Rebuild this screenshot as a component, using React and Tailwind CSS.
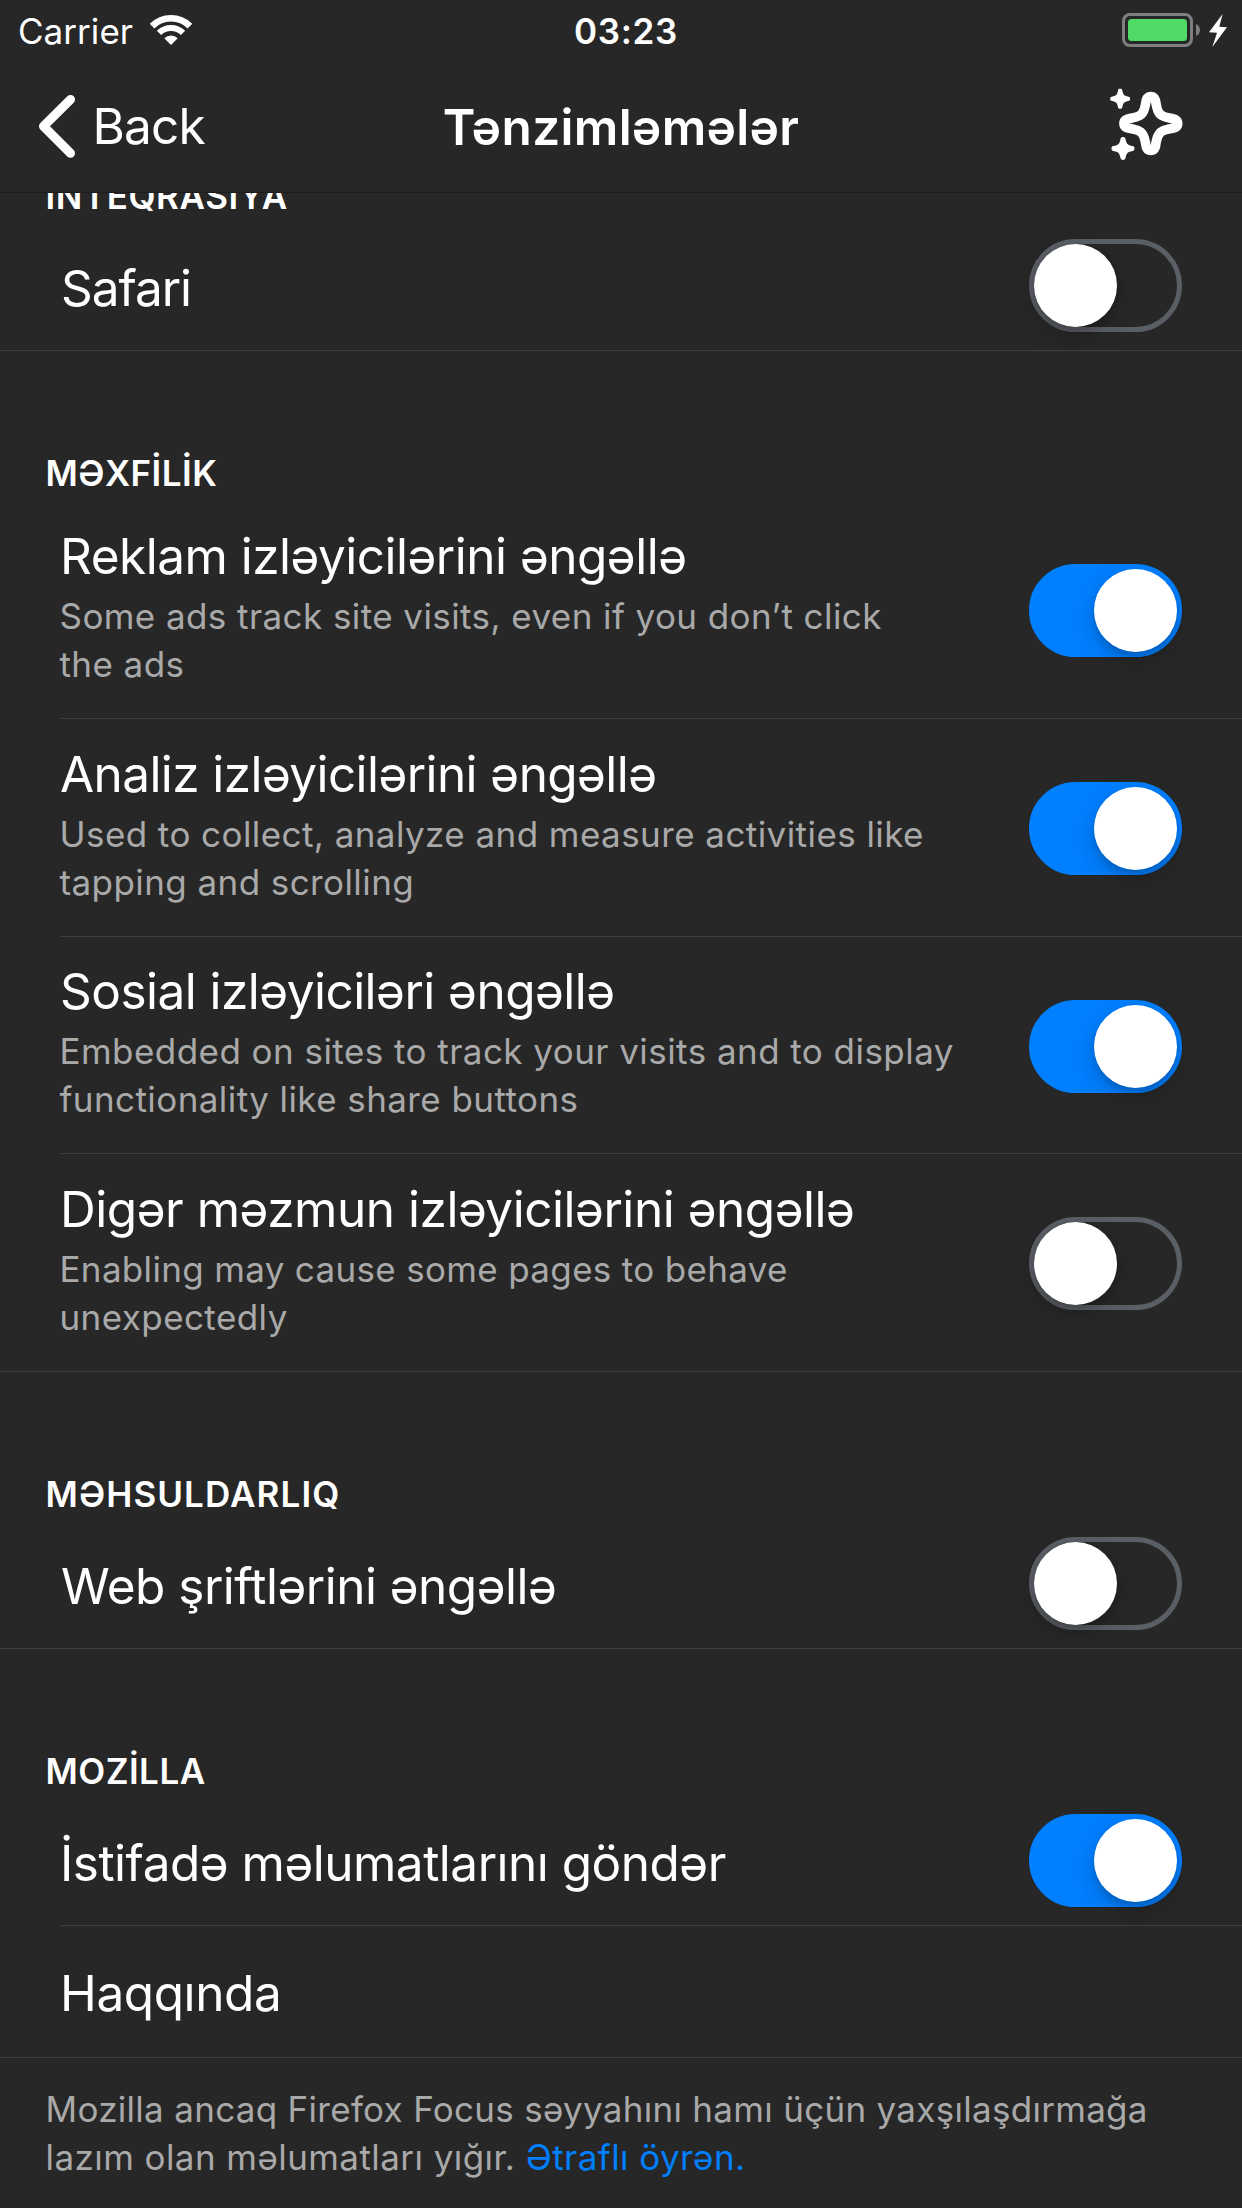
import React from 'react';
import clsx from 'clsx';

const STAR =
  'M0 -95C14 -95 25 -86 28 -71C32 -48 34 -42 38 -38C42 -34 48 -32 71 -28C86 -25 95 -14 95 0C95 14 86 25 71 28C48 32 42 34 38 38C34 42 32 48 28 71C25 86 14 95 0 95C-14 95 -25 86 -28 71C-32 48 -34 42 -38 38C-42 34 -48 32 -71 28C-86 25 -95 14 -95 0C-95 -14 -86 -25 -71 -28C-48 -32 -42 -34 -38 -38C-34 -42 -32 -48 -28 -71C-25 -86 -14 -95 0 -95ZM0 -65C-8 -18 -18 -8 -65 0C-18 8 -8 18 0 65C8 18 18 8 65 0C18 -8 8 -18 0 -65Z';
const SPARK =
  'M0 -30C3.500 -30 5.500 -29 6.500 -25C9 -12 12 -9 25 -6.500C29 -5.500 30 -3.500 30 0C30 3.500 29 5.500 25 6.500C12 9 9 12 6.500 25C5.500 29 3.500 30 0 30C-3.500 30 -5.500 29 -6.500 25C-9 12 -12 9 -25 6.500C-29 5.500 -30 3.500 -30 0C-30 -3.500 -29 -5.500 -25 -6.500C-12 -9 -9 -12 -6.500 -25C-5.500 -29 -3.500 -30 0 -30Z';

function WifiIcon() {
  return (
    <svg className="mt-[14px] ml-[16px] h-[32px] w-[44px] shrink-0" viewBox="0 0 44 32" fill="none" stroke="white">
      <path d="M3.080 12.080A26.750 26.750 0 0 1 40.920 12.080" strokeWidth="6.500" />
      <path d="M9.980 18.980A17 17 0 0 1 34.020 18.980" strokeWidth="6" />
      <path d="M22 31L15.300 24.300A9.500 9.500 0 0 1 28.700 24.300Z" fill="white" stroke="none" />
    </svg>
  );
}

function BatteryIcon() {
  return (
    <svg className="mt-[12px] h-[37px] w-[108px]" viewBox="0 0 108 37" fill="none">
      <rect x="3.500" y="2.500" width="68" height="31" rx="6.500" stroke="#7f7f7f" strokeWidth="3" />
      <rect x="8" y="7" width="59" height="22" rx="3.500" fill="#4fdb65" />
      <path d="M76 12C78.700 13 80 15.500 80 18C80 20.500 78.700 23 76 24Z" fill="#7f7f7f" />
      <path d="M102.600 2L89 20.200L97 20.700L92.300 35L107 15.200L99.300 14.800Z" fill="white" />
    </svg>
  );
}

function SparkleIcon() {
  return (
    <svg className="mt-[28px] h-[72px] w-[73px]" viewBox="449 264 219 216" fill="white">
      <path d={STAR} fillRule="evenodd" transform="translate(571.5 370.5)" />
      <path d={SPARK} transform="translate(479.5 296.5)" />
      <path d={SPARK} transform="translate(488 445.5) scale(1.15)" />
    </svg>
  );
}

function Toggle({ on, className }) {
  return (
    <div
      className={clsx(
        'flex h-[93px] w-[153px] shrink-0 rounded-full border-[5px]',
        on ? 'justify-end border-[#007fff] bg-[#007fff]' : 'border-[#5a5e65]',
        className,
      )}
    >
      <div className="size-[83px] rounded-full bg-white shadow-[0_9px_24px_rgba(0,0,0,0.18),0_4px_6px_rgba(0,0,0,0.14)]" />
    </div>
  );
}

function Heading({ children, className }) {
  return (
    <h2 className={clsx('h-[48px] pl-[45.5px] text-[35px] leading-[48px] font-semibold whitespace-nowrap', className)}>
      {children}
    </h2>
  );
}

function Row({ title, titleClass, sub, subClass, on, toggleClass, inset, className }) {
  const line = 'border-b border-[#404043]';
  return (
    <div className={clsx(!inset && line)}>
      <div className={clsx('ml-[60px] flex items-start justify-between pr-[60px]', inset && line, className)}>
        <div className="whitespace-nowrap">
          <div className={clsx('text-[49.5px] leading-[60px]', titleClass)}>{title}</div>
          {sub && (
            <div className="mt-[6px] ml-[-0.500px] text-[35px] leading-[48px] text-[#a9a9a9]">
              <div className={subClass}>{sub[0]}</div>
              <div className="tracking-[0.420px]">{sub[1]}</div>
            </div>
          )}
        </div>
        {on !== undefined && <Toggle on={on} className={toggleClass} />}
      </div>
    </div>
  );
}

export default function App() {
  return (
    <div className="h-[2208px] w-[1242px] overflow-hidden bg-[#272727] font-[Inter,sans-serif] text-white">
      <header className="flex h-[193px] flex-col border-b border-[#1c1c1c]">
        <div className="flex h-[60px] items-start">
          <div className="flex w-[574px] items-start">
            <span className="mt-[7px] ml-[18px] text-[35px] leading-[48px] tracking-[0.050px]">Carrier</span>
            <WifiIcon />
          </div>
          <span className="mt-[7px] flex-1 text-[35px] leading-[48px] font-semibold tracking-[0.700px]">03:23</span>
          <div className="pr-[14px]">
            <BatteryIcon />
          </div>
        </div>
        <div className="grid flex-1 grid-cols-3 items-start">
          <div className="flex items-start">
            <svg className="mt-[34px] ml-[37px] h-[65px] w-[40px]" viewBox="0 0 40 65" fill="none">
              <path d="M33.500 5.500L6.500 32.300L33.500 59.300" stroke="white" strokeWidth="9" strokeLinecap="round" strokeLinejoin="round" />
            </svg>
            <span className="mt-[36px] ml-[15.500px] text-[49.5px] leading-[60px] tracking-[-0.800px]">Back</span>
          </div>
          <h1 className="mt-[37px] text-center text-[49.5px] leading-[60px] font-semibold tracking-[0.370px] whitespace-nowrap">
            Tənzimləmələr
          </h1>
          <div className="flex justify-end pr-[59.500px]">
            <SparkleIcon />
          </div>
        </div>
      </header>

      <main>
        <section className="overflow-hidden">
          <Heading className="mt-[-21px] tracking-[0.590px]">INTEQRASIYA</Heading>
          <Row className="h-[130px] pt-[38px]" title="Safari" titleClass="ml-px tracking-[-1.050px]" on={false} toggleClass="mt-[-19px]" />
        </section>

        <section className="pt-[98px]">
          <Heading className="tracking-[0.460px]">MƏXFİLİK</Heading>
          <Row
            inset
            className="h-[222px] pt-[29px]"
            title="Reklam izləyicilərini əngəllə"
            titleClass="tracking-[-0.500px]"
            sub={['Some ads track site visits, even if you don’t click', 'the ads']}
            subClass="tracking-[0.420px]"
            on
            toggleClass="mt-[38px]"
          />
          <Row
            inset
            className="h-[218px] pt-[25px]"
            title="Analiz izləyicilərini əngəllə"
            titleClass="tracking-[-0.580px]"
            sub={['Used to collect, analyze and measure activities like', 'tapping and scrolling']}
            subClass="tracking-[0.430px]"
            on
            toggleClass="mt-[38px]"
          />
          <Row
            inset
            className="h-[217px] pt-[24px]"
            title="Sosial izləyiciləri əngəllə"
            titleClass="tracking-[-0.530px]"
            sub={['Embedded on sites to track your visits and to display', 'functionality like share buttons']}
            subClass="tracking-[0.450px]"
            on
            toggleClass="mt-[39px]"
          />
          <Row
            className="h-[217px] pt-[25px]"
            title="Digər məzmun izləyicilərini əngəllə"
            titleClass="tracking-[-0.470px]"
            sub={['Enabling may cause some pages to behave', 'unexpectedly']}
            subClass="tracking-[0.330px]"
            on={false}
            toggleClass="mt-[38px]"
          />
        </section>

        <section className="pt-[98px]">
          <Heading className="tracking-[1.100px]">MƏHSULDARLIQ</Heading>
          <Row className="h-[130px] pt-[38px]" title="Web şriftlərini əngəllə" titleClass="ml-px tracking-[-0.520px]" on={false} toggleClass="mt-[-19px]" />
        </section>

        <section className="pt-[98px]">
          <Heading className="tracking-[0.480px]">MOZİLLA</Heading>
          <Row inset className="h-[131px] pt-[38px]" title="İstifadə məlumatlarını göndər" titleClass="tracking-[-0.500px]" on toggleClass="mt-[-19px]" />
          <Row className="h-[131px] pt-[37px]" title="Haqqında" titleClass="tracking-[-0.400px]" />
        </section>
      </main>

      <footer className="pt-[27px] pl-[45.5px] text-[35px] leading-[48px] whitespace-nowrap text-[#a9a9a9]">
        <div className="tracking-[0.295px]">Mozilla ancaq Firefox Focus səyyahını hamı üçün yaxşılaşdırmağa</div>
        <div className="tracking-[0.430px]">
          lazım olan məlumatları yığır. <a className="text-[#007fff]">Ətraflı öyrən.</a>
        </div>
      </footer>
    </div>
  );
}
